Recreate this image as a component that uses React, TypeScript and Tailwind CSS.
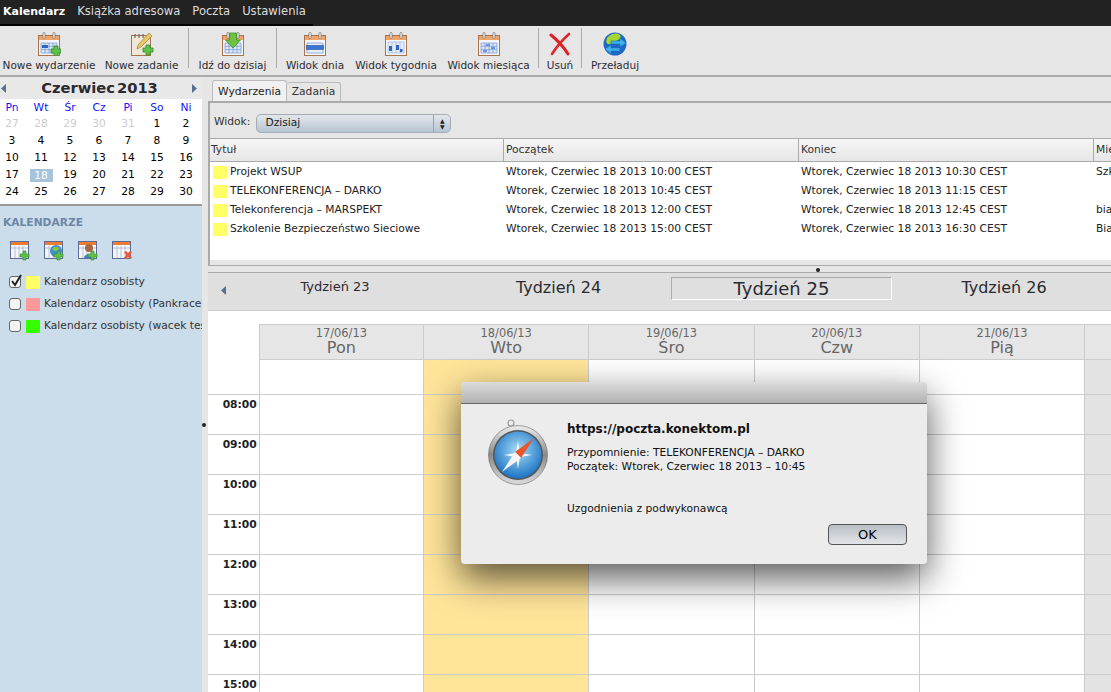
const FONT = "font-['DejaVu_Sans',sans-serif]";

const rows = [
  { title: 'Projekt WSUP', start: '10:00', end: '10:30', place: 'Szk' },
  { title: 'TELEKONFERENCJA – DARKO', start: '10:45', end: '11:15', place: '' },
  { title: 'Telekonferencja – MARSPEKT', start: '12:00', end: '12:45', place: 'bia' },
  { title: 'Szkolenie Bezpieczeństwo Sieciowe', start: '15:00', end: '16:30', place: 'Bia' },
];

const weeks = [
  ['27', '28', '29', '30', '31', '1', '2'],
  ['3', '4', '5', '6', '7', '8', '9'],
  ['10', '11', '12', '13', '14', '15', '16'],
  ['17', '18', '19', '20', '21', '22', '23'],
  ['24', '25', '26', '27', '28', '29', '30'],
];

const days = [
  { date: '17/06/13', name: 'Pon' },
  { date: '18/06/13', name: 'Wto' },
  { date: '19/06/13', name: 'Śro' },
  { date: '20/06/13', name: 'Czw' },
  { date: '21/06/13', name: 'Pią' },
];

const hours = ['', '08:00', '09:00', '10:00', '11:00', '12:00', '13:00', '14:00', '15:00'];

const Plus = ({ x = 14, y = 14 }: { x?: number; y?: number }) => (
  <path
    d={`M${x + 3} ${y}h4v3h3v4h-3v3h-4v-3h-3v-4h3z`}
    fill="#5fc04a"
    stroke="#2f8a2a"
    strokeWidth="0.8"
  />
);

const CalBase = ({ children }: { children?: React.ReactNode }) => (
  <>
    <rect x="1.5" y="3.5" width="21" height="20" fill="#f4f6fa" stroke="#a8744e" />
    <rect x="2" y="4" width="20" height="4" fill="#f0a468" />
    <rect x="6" y="0.5" width="2" height="6" rx="1" fill="#fff" stroke="#666" strokeWidth="0.7" />
    <rect x="16" y="0.5" width="2" height="6" rx="1" fill="#fff" stroke="#666" strokeWidth="0.7" />
    {children}
  </>
);

const GridLines = () => (
  <path
    d="M4 11h16v10H4zM4 14.3h16M4 17.6h16M8 11v10M12 11v10M16 11v10"
    fill="#dbe6f6"
    stroke="#7f9fd8"
    strokeWidth="0.8"
  />
);

const ToolIcon = ({ kind }: { kind: string }) => {
  if (kind === 'delete') {
    return (
      <svg width="24" height="24" viewBox="0 0 24 24">
        <path d="M3 3Q13 11 20 22" fill="none" stroke="#dd1f26" strokeWidth="3" strokeLinecap="round" />
        <path d="M21 2Q11 11 4 22" fill="none" stroke="#e0262c" strokeWidth="2.6" strokeLinecap="round" />
      </svg>
    );
  }
  if (kind === 'reload') {
    return (
      <svg width="24" height="24" viewBox="0 0 24 24">
        <circle cx="12" cy="12" r="11.5" fill="#1f67c8" />
        <path d="M6 4c4-3 9-3 11-1s-1 5-4 6-5 4-8 3-2-6 1-8z" fill="#a6d62f" />
        <path d="M8 9h9V6l6 5-6 4v-3H8z" fill="#3fb4ea" stroke="#1a6fc0" strokeWidth="0.6" />
        <path d="M17 19H8v3l-6-5 6-4v3h9z" fill="#3fb4ea" stroke="#1a6fc0" strokeWidth="0.6" />
      </svg>
    );
  }
  if (kind === 'task') {
    return (
      <svg width="24" height="24" viewBox="0 0 24 24">
        <rect x="1.5" y="3.5" width="19" height="20" fill="#eee7d8" stroke="#a8744e" />
        <path d="M5 2v4M9 2v4M13 2v4" stroke="#555" />
        <path d="M7 17l1-4 11-12 3 3-11 11z" fill="#e8c565" stroke="#9b8440" strokeWidth="0.7" />
        <Plus x={13} y={13} />
      </svg>
    );
  }
  return (
    <svg width="24" height="24" viewBox="0 0 24 24">
      <CalBase>
        {kind === 'day' ? (
          <>
            <path d="M4 11h16v10H4z" fill="#e6edf8" stroke="#7f9fd8" strokeWidth="0.8" />
            <rect x="3.5" y="13.5" width="17" height="4" fill="#3c76d2" stroke="#1f4f9f" strokeWidth="0.6" />
          </>
        ) : kind === 'week' ? (
          <>
            <path d="M4 10h16v11H4zM8 10v11M12 10v11M16 10v11" fill="#e6edf8" stroke="#9cb4dc" strokeWidth="0.7" />
            <rect x="5" y="14" width="3" height="5" fill="#2f66bf" />
            <rect x="12" y="13" width="3" height="5" fill="#2f66bf" />
            <rect x="16" y="17" width="2.5" height="3" fill="#2f66bf" />
          </>
        ) : (
          <>
            <GridLines />
            {kind === 'month' && <path d="M9 12h4v2H9zM14 15h4v2h-4zM6 18h4v2H6z" fill="#6d94dc" />}
            {kind === 'new' && (
              <>
                <rect x="5" y="13" width="6" height="3" fill="#2f66bf" />
                <Plus x={14} y={14} />
              </>
            )}
            {kind === 'today' && <path d="M8.5 1h7v7h4l-7.5 8-7.5-8h4z" fill="#6fc23e" stroke="#2f8a2a" strokeWidth="0.7" />}
          </>
        )}
      </CalBase>
    </svg>
  );
};

const toolbar = [
  { label: 'Nowe wydarzenie', kind: 'new', w: 'w-[96px]' },
  { label: 'Nowe zadanie', kind: 'task', w: 'w-[89px]' },
  { label: 'sep' },
  { label: 'Idź do dzisiaj', kind: 'today', w: 'w-[83px]' },
  { label: 'sep' },
  { label: 'Widok dnia', kind: 'day', w: 'w-[72px]' },
  { label: 'Widok tygodnia', kind: 'week', w: 'w-[90px]' },
  { label: 'Widok miesiąca', kind: 'month', w: 'w-[95px]' },
  { label: 'sep' },
  { label: 'Usuń', kind: 'delete', w: 'w-[38px]' },
  { label: 'sep' },
  { label: 'Przeładuj', kind: 'reload', w: 'w-[62px]' },
];

const SideIcon = ({ kind }: { kind: string }) => (
  <svg width="22" height="20" viewBox="0 0 22 20">
    <rect x="0.5" y="0.5" width="18" height="17" fill="#f3f5f9" stroke="#5a6a9a" />
    <rect x="1" y="1" width="17" height="3" fill="#ef7b2f" />
    <path d="M1 7h17M5 5v12M9 5v12M13 5v12" stroke="#aab4cc" strokeWidth="0.8" />
    {kind === 'web' && <circle cx="12" cy="10" r="6" fill="#3d8fd0" />}
    {kind === 'web' && <path d="M8 8c2-3 6-3 7 0-2 3-5 2-7 0z" fill="#8cc63f" />}
    {kind === 'user' && <circle cx="11" cy="7" r="4" fill="#a8683f" />}
    {kind === 'user' && <path d="M6 17c0-5 9-5 10 0z" fill="#3f7fd0" />}
    {kind === 'remove' ? (
      <path d="M12 11l2-1 2 2 2-2 2 1-2 3 2 3-2 1-2-2-2 2-2-1 2-3z" fill="#ea5a38" />
    ) : (
      <path d="M13 10h3v3h3v3h-3v3h-3v-3h-3v-3h3z" fill="#5fc04a" stroke="#2f8a2a" strokeWidth="0.6" />
    )}
  </svg>
);

const SafariIcon = () => (
  <svg width="60" height="66" viewBox="0 0 60 66">
    <defs>
      <radialGradient id="dial" cx="50%" cy="40%" r="60%">
        <stop offset="0%" stopColor="#a9dcf7" />
        <stop offset="100%" stopColor="#1b74c4" />
      </radialGradient>
      <linearGradient id="rim" x1="0" y1="0" x2="0" y2="1">
        <stop offset="0%" stopColor="#eeeeee" />
        <stop offset="50%" stopColor="#8a8a8a" />
        <stop offset="100%" stopColor="#dddddd" />
      </linearGradient>
    </defs>
    <circle cx="23" cy="4" r="3" fill="none" stroke="#999" strokeWidth="1.2" />
    <circle cx="30" cy="36" r="29.5" fill="url(#rim)" stroke="#666" strokeWidth="0.6" />
    <circle cx="30" cy="36" r="25" fill="#555" />
    <circle cx="30" cy="36" r="23.5" fill="url(#dial)" />
    <path d="M30 22l2 12 12 2-12 2-2 12-2-12-12-2 12-2z" fill="#fff" opacity="0.9" />
    <path d="M46 19L27 33l6 6z" fill="#e8562a" />
    <path d="M14 53l19-14-6-6z" fill="#f4f4f4" />
  </svg>
);

const Arrow = ({ right = false, color = '#56708f' }: { right?: boolean; color?: string }) => (
  <svg width="5" height="9" viewBox="0 0 5 9">
    <path d={right ? 'M0 0l5 4.5L0 9z' : 'M5 0L0 4.5 5 9z'} fill={color} />
  </svg>
);

export default function App() {
  return (
    <div className={`${FONT} relative flex h-[692px] w-[1111px] flex-col overflow-hidden bg-[#e6e6e6] text-[10.7px] text-[#222]`}>
      {/* top menu */}
      <div className="h-[26px] shrink-0 bg-[#222]">
        <div className="flex h-[24px] w-[313px] items-center gap-3 whitespace-nowrap pl-[3px] text-[11.6px] text-[#ddd] [box-shadow:0_2px_0_#000]">
          <span className="text-[11px] font-bold text-white">Kalendarz</span>
          <span>Książka adresowa</span>
          <span>Poczta</span>
          <span>Ustawienia</span>
        </div>
      </div>

      {/* toolbar */}
      <div className="flex h-[51px] shrink-0 items-start border-b-2 border-[#aaa] bg-[#e6e6e6] pl-[1px] pt-[2px]">
        {toolbar.map((item, i) =>
          item.label === 'sep' ? (
            <div key={i} className="mx-[2px] h-[40px] w-px shrink-0 bg-[#aaa]" />
          ) : (
            <div key={i} className={`${item.w} flex shrink-0 flex-col items-center`}>
              <div className="mt-[4px] h-[24px]">
                <ToolIcon kind={item.kind as string} />
              </div>
              <span className="mt-[2px] whitespace-nowrap text-[10.5px] leading-[14px] text-[#2d2d33]">{item.label}</span>
            </div>
          ),
        )}
      </div>

      <div className="flex min-h-0 flex-1">
        {/* left column */}
        <div className="flex w-[202px] shrink-0 flex-col overflow-hidden bg-[#cbdcea]">
          <div className="border-b-2 border-[#999] bg-white pb-[3px]">
            <div className="flex h-[22px] items-center justify-between bg-[#e8e8e8] pl-[1px] pr-[5px]">
              <Arrow />
              <span className="flex gap-[2px] pl-[1px] text-[14.7px] font-bold leading-none text-[#2a2a30]">
                <span>Czerwiec</span>
                <span>2013</span>
              </span>
              <Arrow right />
            </div>
            <div className="grid grid-cols-[repeat(7,24px)] gap-x-[5px] text-center">
              {['Pn', 'Wt', 'Śr', 'Cz', 'Pi', 'So', 'Ni'].map((d) => (
                <div key={d} className="h-[17px] leading-[18px] text-[#1414ff]">{d}</div>
              ))}
              {weeks.map((week, w) =>
                week.map((d, i) => {
                  const muted = w === 0 && i < 5;
                  const today = d === '18';
                  return (
                    <div key={`${w}-${i}`} className="flex h-[17px] items-center justify-center">
                      <span className={today ? 'block h-[13px] w-[23px] bg-[#a6c3dc] leading-[13px] text-white' : muted ? 'text-[#ccc]' : 'text-black'}>
                        {d}
                      </span>
                    </div>
                  );
                }),
              )}
            </div>
          </div>
          <div className="pl-[3px] pt-[10px] font-bold leading-[14px] text-[#6d87a6]">KALENDARZE</div>
          <div className="flex gap-[12px] pl-[10px] pt-[11px]">
            <SideIcon kind="add" />
            <SideIcon kind="web" />
            <SideIcon kind="user" />
            <SideIcon kind="remove" />
          </div>
          <div className="flex flex-col gap-[8px] pl-[9px] pt-[14px]">
            {[
              { name: 'Kalendarz osobisty', color: 'bg-[#ffff66]', on: true },
              { name: 'Kalendarz osobisty (Pankracek test)', color: 'bg-[#ff9999]', on: false },
              { name: 'Kalendarz osobisty (wacek test)', color: 'bg-[#33ff00]', on: false },
            ].map((c) => (
              <div key={c.name} className="flex h-[14px] items-center">
                <span className="relative h-[12px] w-[12px] shrink-0 rounded-[3px] border border-[#666] bg-[#f4f4f4]">
                  {c.on && (
                    <svg className="absolute -top-[3px] left-0" width="13" height="13" viewBox="0 0 13 13">
                      <path d="M2 7l3 4 6-10" fill="none" stroke="#222" strokeWidth="2" />
                    </svg>
                  )}
                </span>
                <span className={`${c.color} ml-[5px] h-[13px] w-[14px] shrink-0 rounded-[1px]`} />
                <span className="ml-[4px] whitespace-nowrap text-[#333]">{c.name}</span>
              </div>
            ))}
          </div>
        </div>

        {/* splitter */}
        <div className="w-[6px] shrink-0 bg-[#e6e6e6]" />

        {/* right column */}
        <div className="flex min-w-0 flex-1 flex-col overflow-hidden">
          <div className="flex h-[26px] shrink-0 items-end border-b-2 border-[#aaa] pl-[4px]">
            <div className="flex h-[21px] w-[75px] items-center justify-center rounded-t-[3px] border border-b-0 border-[#bbb] bg-[#f0f0f0] pt-[2px] text-[#222]">Wydarzenia</div>
            <div className="flex h-[19px] w-[54px] items-center justify-center rounded-t-[3px] border border-b-0 border-l-0 border-[#bbb] pt-[1px] text-[#333]">Zadania</div>
          </div>
          <div className="flex h-[35px] shrink-0 items-center gap-[6px] border-l-2 border-[#aaa] pl-[4px] pt-[6px]">
            <span className="-mt-[3px] text-[#333]">Widok:</span>
            <div className="flex h-[19px] w-[195px] items-center rounded-[5px] border border-[#a6acb3] bg-gradient-to-b from-[#e3e7ec] to-[#b6c5d3]">
              <span className="flex-1 pl-[8px] text-[#222]">Dzisiaj</span>
              <span className="flex h-full w-[17px] flex-col items-center justify-center border-l border-[#9aa4ae] text-[6px] leading-[6px] text-[#222]">
                <span>▲</span>
                <span>▼</span>
              </span>
            </div>
          </div>
          <div className="flex h-[127px] shrink-0 flex-col border-l-2 border-[#aaa]">
            <div className="flex h-[24px] shrink-0 items-center border-y border-[#aaa] bg-gradient-to-b from-[#f6f6f6] to-[#e6e6e6] text-[#333]">
              <span className="w-[293px] shrink-0 pl-[1px]">Tytuł</span>
              <span className="w-[295px] shrink-0 border-l border-[#aaa] pl-[2px] leading-[22px]">Początek</span>
              <span className="w-[295px] shrink-0 border-l border-[#aaa] pl-[2px] leading-[22px]">Koniec</span>
              <span className="flex-1 overflow-hidden whitespace-nowrap border-l border-[#aaa] pl-[2px] leading-[22px]">Miejsce</span>
            </div>
            <div className="flex-1 bg-white pt-px">
              {rows.map((r) => (
                <div key={r.title} className="flex h-[19px] items-center text-[#222]">
                  <span className="flex w-[293px] shrink-0 items-center pl-[3px]">
                    <span className="h-[13px] w-[14px] shrink-0 rounded-[1px] bg-[#ffff66]" />
                    <span className="ml-[3px] whitespace-nowrap">{r.title}</span>
                  </span>
                  <span className="w-[295px] shrink-0 pl-[3px]">Wtorek, Czerwiec 18 2013 {r.start} CEST</span>
                  <span className="w-[295px] shrink-0 pl-[3px]">Wtorek, Czerwiec 18 2013 {r.end} CEST</span>
                  <span className="flex-1 overflow-hidden pl-[3px]">{r.place}</span>
                </div>
              ))}
            </div>
            <div className="h-[5px] shrink-0 bg-[#e6e6e6]" />
          </div>
          <div className="h-[8px] shrink-0 border-y border-[#aaa] bg-[#e6e6e6]" />

          {/* week strip */}
          <div className="flex h-[38px] shrink-0 items-start border-b border-[#ccc] bg-[#dfdfdf] text-[#2a2a30]">
            <span className="flex w-[30px] shrink-0 pl-[13px] pt-[13px]">
              <Arrow />
            </span>
            <span className="w-[194px] shrink-0 pt-[5px] text-center text-[13px] leading-[18px]">Tydzień 23</span>
            <span className="w-[239px] shrink-0 pl-[14px] pt-[5px] text-center text-[16px] leading-[20px]">Tydzień 24</span>
            <span className="mt-[4px] flex h-[23px] w-[221px] shrink-0 items-center justify-center border border-[#aaa] border-b-white border-r-white text-[18px]">Tydzień 25</span>
            <span className="flex-1 pl-[5px] pt-[5px] text-center text-[16px] leading-[20px]">Tydzień 26</span>
          </div>

          {/* day grid */}
          <div className="min-h-0 flex-1 overflow-hidden bg-white pt-[13px]">
            <div className="flex h-[36px] pl-[50.7px]">
              {days.map((d) => (
                <div key={d.date} className="flex w-[165.3px] shrink-0 flex-col items-center border-y border-r border-[#ccc] bg-[#e6e6e6] first:border-l text-[#666]">
                  <span className="mt-[2px] text-[11.4px] leading-[12px]">{d.date}</span>
                  <span className="text-[16px] leading-[18px]">{d.name}</span>
                </div>
              ))}
              <div className="flex-1 border-y border-[#ccc] bg-[#e6e6e6]" />
            </div>
            {hours.map((h, i) => (
              <div key={i} className={`flex ${i === 0 ? 'h-[35px]' : 'h-[40px]'} border-b border-[#ccc]`}>
                <div className="w-[50.7px] shrink-0 pr-[2px] pt-[3px] text-right font-bold leading-[14px] text-[#222]">{h}</div>
                {days.map((d, j) => (
                  <div key={d.date} className={`w-[165.3px] shrink-0 border-r border-[#ccc] ${j === 0 ? 'border-l' : ''} ${j === 1 ? 'bg-[#ffe59a]' : 'bg-white'}`} />
                ))}
                <div className="flex-1 bg-[#e3e3e3]" />
              </div>
            ))}
          </div>
        </div>
      </div>

      {/* reminder alert */}
      <div className="absolute left-[461px] top-[382px] flex h-[182px] w-[466px] flex-col overflow-hidden rounded-[4px] bg-[#ececec] shadow-[0_14px_36px_rgba(0,0,0,0.65)]">
        <div className="h-[22px] shrink-0 border-b border-[#666] bg-gradient-to-b from-[#dcdcdc] to-[#b2b2b2]" />
        <div className="flex flex-1 pl-[27px] pt-[15px]">
          <SafariIcon />
          <div className="ml-[19px] flex-1 text-[#111]">
            <div className="mt-[2px] text-[12px] font-bold leading-[16px]">https://poczta.konektom.pl</div>
            <div className="mt-[9px] leading-[14px]">Przypomnienie: TELEKONFERENCJA – DARKO</div>
            <div className="leading-[14px]">Początek: Wtorek, Czerwiec 18 2013 – 10:45</div>
            <div className="mt-[28px] leading-[14px]">Uzgodnienia z podwykonawcą</div>
            <div className="mt-[8px] flex justify-end pr-[20px]">
              <div className="flex h-[21px] w-[79px] items-center justify-center rounded-[4px] border border-[#555] bg-gradient-to-b from-[#b9bec6] to-[#e2e4e8] text-[13px] text-black">OK</div>
            </div>
          </div>
        </div>
      </div>

      {/* resize cursors */}
      <span className="absolute left-[202px] top-[423px] h-[4px] w-[4px] rounded-full bg-[#222]" />
      <span className="absolute left-[816px] top-[268px] h-[4px] w-[4px] rounded-full bg-[#222]" />
    </div>
  );
}
